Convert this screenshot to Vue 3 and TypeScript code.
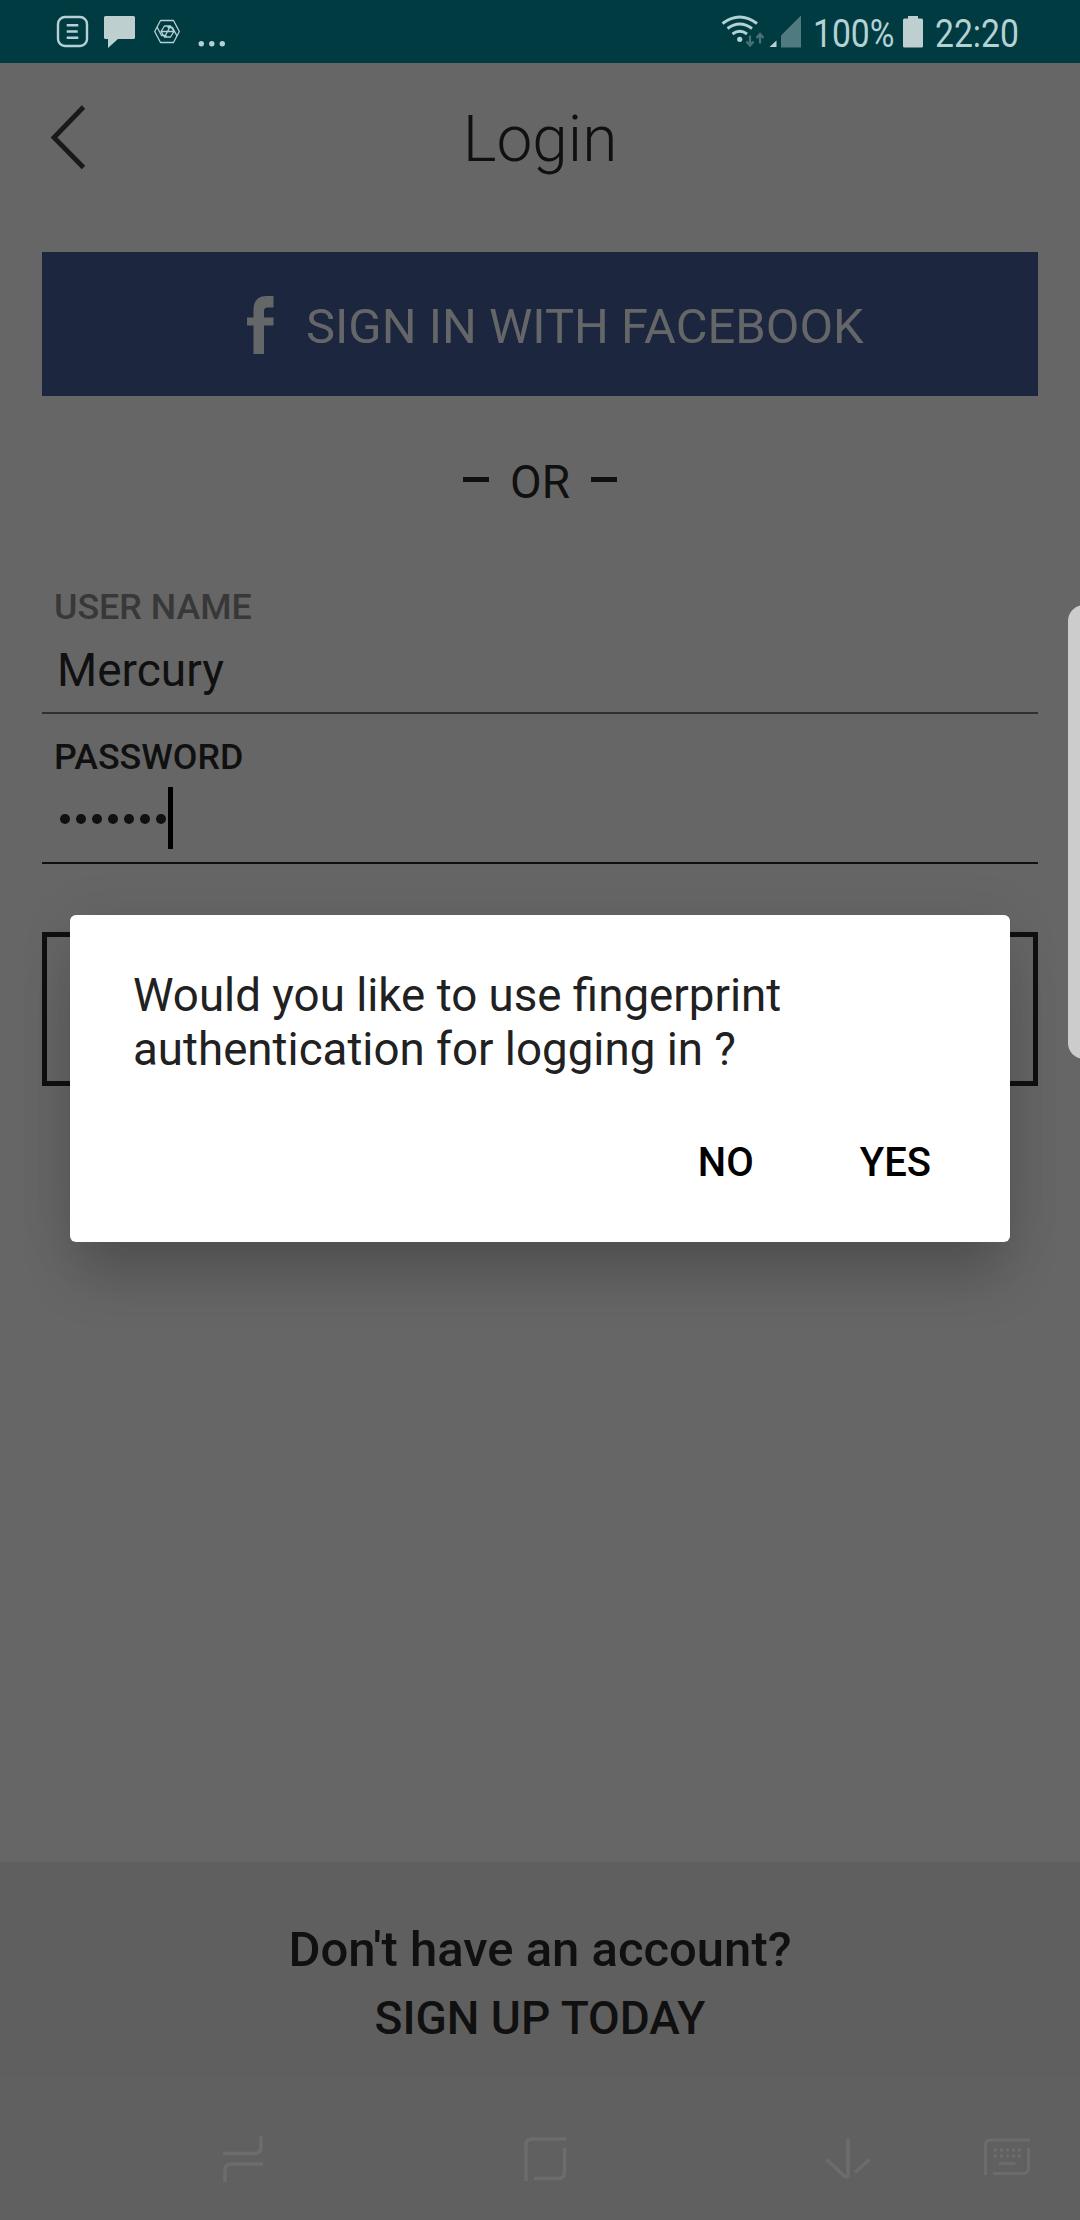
<script setup lang="ts">
import { ref } from 'vue'

const userName = ref('Mercury')
const passwordLength = ref(7)
const keyColumns = [0, 1, 2, 3, 4]
</script>

<template>
  <div class="screen">
    <header class="status">
      <svg class="status-left" width="240" height="63" viewBox="0 0 240 63">
        <rect x="58" y="17" width="29" height="29" rx="7" fill="none" stroke="#b4d1d3" stroke-width="2.4" />
        <path d="M66.700 25.300h11.600M66.700 31.500h11M66.700 37.800h11.600" stroke="#b4d1d3" stroke-width="2.600" />
        <path d="M105.500 16h28a1.500 1.500 0 0 1 1.500 1.500v20a1.500 1.500 0 0 1-1.500 1.500H118L108 48V39h-2.500a1.500 1.500 0 0 1-1.500-1.500v-20a1.500 1.500 0 0 1 1.500-1.500z" fill="#bdcfcf" />
        <g fill="none" stroke="#b4d1d3" stroke-width="1.300" stroke-linejoin="round">
          <path d="M160.500 20.500h13l5.800 11-5.800 11h-13l-5.800-11z" />
          <path d="M164.500 26h6l3.500 5.500-3.500 5.500h-6l-3.500-5.500zM161 31.500h13M164.500 37l6-11M157 27l4.500 8.500h5M177 36l-4.500-8.500h-5" />
        </g>
        <g fill="#b4d1d3">
          <circle cx="201.300" cy="43.800" r="2.700" />
          <circle cx="211.800" cy="43.800" r="2.700" />
          <circle cx="222.300" cy="43.800" r="2.700" />
        </g>
      </svg>
      <div class="status-right">
        <svg width="84" height="63" viewBox="720 0 84 63">
          <g fill="none" stroke="#b4d1d3" stroke-width="2.900">
            <path d="M722.500 23.500q17.200-13 34.500 0" />
            <path d="M727.500 28.500q12.200-9 24.500 0" />
            <path d="M732.500 34q7.300-5.500 14.500 0" />
          </g>
          <circle cx="739.700" cy="39.300" r="2.600" fill="#b4d1d3" />
          <path d="M750 35.500v9M746.500 41.500l3.500 4 3.500-4M760 43.500v-9M756.500 38l3.500-4 3.500 4" fill="none" stroke="#467277" stroke-width="2.300" />
          <path d="M769.500 47h7v-6.500z" fill="#bdcfcf" />
          <path d="M781 47.500V35.500l20-20v32z" fill="#4f7a7f" />
        </svg>
        <span class="percent"><b>100%</b></span>
        <svg class="battery" width="22" height="63" viewBox="0 0 22 63">
          <path d="M6 16h10v2.500h3.500q1.500 0 1.500 1.500v26q0 1.500-1.500 1.500h-17Q1 47.500 1 46V20q0-1.500 1.500-1.500H6z" fill="#bdcfcf" />
        </svg>
        <span class="clock"><b>22:20</b></span>
      </div>
    </header>

    <div class="title-bar">
      <svg class="back" width="40" height="70" viewBox="0 0 40 70">
        <path d="M34.500 5L5 35.500l29.500 30" fill="none" stroke="#191919" stroke-width="4.800" />
      </svg>
      <h1>Login</h1>
    </div>

    <main>
      <button class="facebook">
        <svg width="28" height="58" viewBox="0 0 28 58">
          <path d="M26.500 0v11.500h-6q-3.500 0-3.500 3.500v6.500h9.500V29.500H17V58H6.500V29.500H0v-8h6.500V14Q6.500 0 19.500 0z" fill="#656668" />
        </svg>
        <span>SIGN IN WITH FACEBOOK</span>
      </button>

      <div class="divider"><i></i><span>OR</span><i></i></div>

      <section class="field">
        <label>USER NAME</label>
        <div class="value">{{ userName }}</div>
      </section>
      <section class="field active">
        <label>PASSWORD</label>
        <div class="secret">
          <i v-for="n in passwordLength" :key="n"></i>
          <span class="caret"></span>
        </div>
      </section>
      <div class="submit"></div>
    </main>

    <footer>
      <p class="ask">Don't have an account?</p>
      <p class="signup">SIGN UP TODAY</p>
    </footer>

    <nav>
      <svg width="1080" height="144" viewBox="0 2076 1080 144" fill="none" stroke="#6c6c6c" stroke-width="3.600">
        <path d="M261 2136v11q0 6.500-6.500 6.500H223M225 2182v-11.500q0-6.500 6.500-6.500H263" />
        <path d="M526 2181v-36q0-6 6-6h34.500M564.500 2148v24q0 6.500-6.500 6.500h-24" />
        <path d="M848 2139v36q0 3-3 1.500L826.500 2159.500M869.500 2159.500L855 2172.500" />
        <g stroke-width="3">
          <path d="M985.500 2175v-30q0-5 5-5H1030M1028.500 2148v20q0 5.500-5.500 5.500H993M998.500 2163.500h17" />
          <path v-for="k in keyColumns" :key="k" :d="`M${994 + k * 6} 2150h3M${994 + k * 6} 2156h3`" />
        </g>
      </svg>
    </nav>

    <aside class="edge-handle"></aside>

    <div class="dialog" role="dialog">
      <p>Would you like to use fingerprint<br>authentication for logging in ?</p>
      <div class="actions">
        <button class="no">NO</button>
        <button class="yes">YES</button>
      </div>
    </div>
  </div>
</template>

<style>
body {
  margin: 0;
  background: #666;
}
</style>

<style scoped>
.screen {
  position: relative;
  width: 1080px;
  height: 2220px;
  display: flex;
  flex-direction: column;
  overflow: hidden;
  background: #666;
  color: #101010;
  font-family: Roboto, "Liberation Sans", sans-serif;
}
svg { display: block; flex: none; }
h1, p { margin: 0; }
button {
  border: 0;
  padding: 0;
  font-family: inherit;
  background: none;
}
.status {
  height: 63px;
  flex: none;
  display: flex;
  justify-content: space-between;
  background: #003b42;
  color: #b4d1d3;
}
.status-right {
  display: flex;
  width: 360px;
}
.status b {
  display: block;
  font-weight: 400;
  font-size: 38.500px;
  line-height: 63px;
  padding-top: 2px;
  white-space: nowrap;
  transform: scaleX(0.875);
  transform-origin: 0 0;
}
.percent { width: 80px; margin-left: 9px; }
.battery { margin-left: 9px; }
.clock { width: 90px; margin-left: 11px; }
.title-bar {
  height: 152px;
  flex: none;
  display: grid;
  grid-template-columns: 120px 1fr 120px;
  align-items: center;
}
.back { margin-left: 49px; margin-top: -4px; }
h1 {
  text-align: center;
  font-weight: 300;
  font-size: 64px;
  line-height: 76px;
  padding-top: 2px;
}
main {
  flex: 1;
  padding: 37px 42px 0;
}
.facebook {
  display: flex;
  align-items: center;
  width: 996px;
  height: 144px;
  padding-left: 205px;
  background: #1d263f;
  color: #656668;
  font-size: 48.900px;
  line-height: 56px;
}
.facebook svg { margin-top: 2px; }
.facebook span { margin: 6px 0 0 31px; white-space: nowrap; }
.divider {
  height: 60px;
  margin-top: 56px;
  display: flex;
  align-items: center;
  justify-content: center;
  gap: 21px;
  font-size: 46px;
  line-height: 60px;
}
.divider i {
  width: 26px;
  height: 5px;
  margin-top: -5px;
  background: #101010;
}
.field {
  height: 126px;
  margin-top: 74px;
  border-bottom: 2px solid #303030;
}
.field label {
  display: block;
  padding-left: 12px;
  font-size: 35.800px;
  line-height: 42px;
  font-weight: 500;
  color: #383838;
}
.value {
  padding: 15px 0 0 15px;
  font-size: 46px;
  line-height: 54px;
}
.field.active {
  margin-top: 22px;
  border-color: #101010;
}
.active label { color: #101010; }
.secret {
  display: flex;
  align-items: center;
  height: 62px;
  padding: 9px 0 0 18px;
}
.secret i {
  width: 10px;
  height: 10px;
  margin-top: 2px;
  margin-right: 6px;
  border-radius: 50%;
  background: #101010;
}
.caret {
  width: 5px;
  height: 62px;
  margin-left: -4px;
  background: #000;
}
.submit {
  box-sizing: border-box;
  height: 154px;
  margin-top: 68px;
  border: 5px solid #101010;
}
footer {
  box-sizing: border-box;
  height: 214px;
  padding-top: 58px;
  text-align: center;
  font-weight: 500;
  line-height: 60px;
  background: #5f5f5f;
}
.ask { font-size: 49px; }
.signup { margin-top: 8px; font-size: 46px; }
nav {
  height: 144px;
  background: #606060;
}
.edge-handle {
  position: absolute;
  left: 1068px;
  top: 605px;
  width: 32px;
  height: 454px;
  border-radius: 18px;
  background: #ccc;
}
.dialog {
  position: absolute;
  left: 70px;
  top: 915px;
  box-sizing: border-box;
  width: 940px;
  height: 327px;
  padding: 54px 63px 0;
  border-radius: 6px;
  background: #fff;
  color: #212121;
  box-shadow: 0 42px 52px -8px rgba(0, 0, 0, 0.18), 0 4px 56px rgba(0, 0, 0, 0.09);
}
.dialog p {
  font-size: 45.700px;
  line-height: 54px;
  white-space: nowrap;
}
.actions {
  display: flex;
  justify-content: flex-end;
  gap: 106px;
  padding: 61px 16px 0 0;
}
.actions button {
  font-size: 40px;
  line-height: 50px;
  font-weight: 500;
  color: #000;
}
</style>
